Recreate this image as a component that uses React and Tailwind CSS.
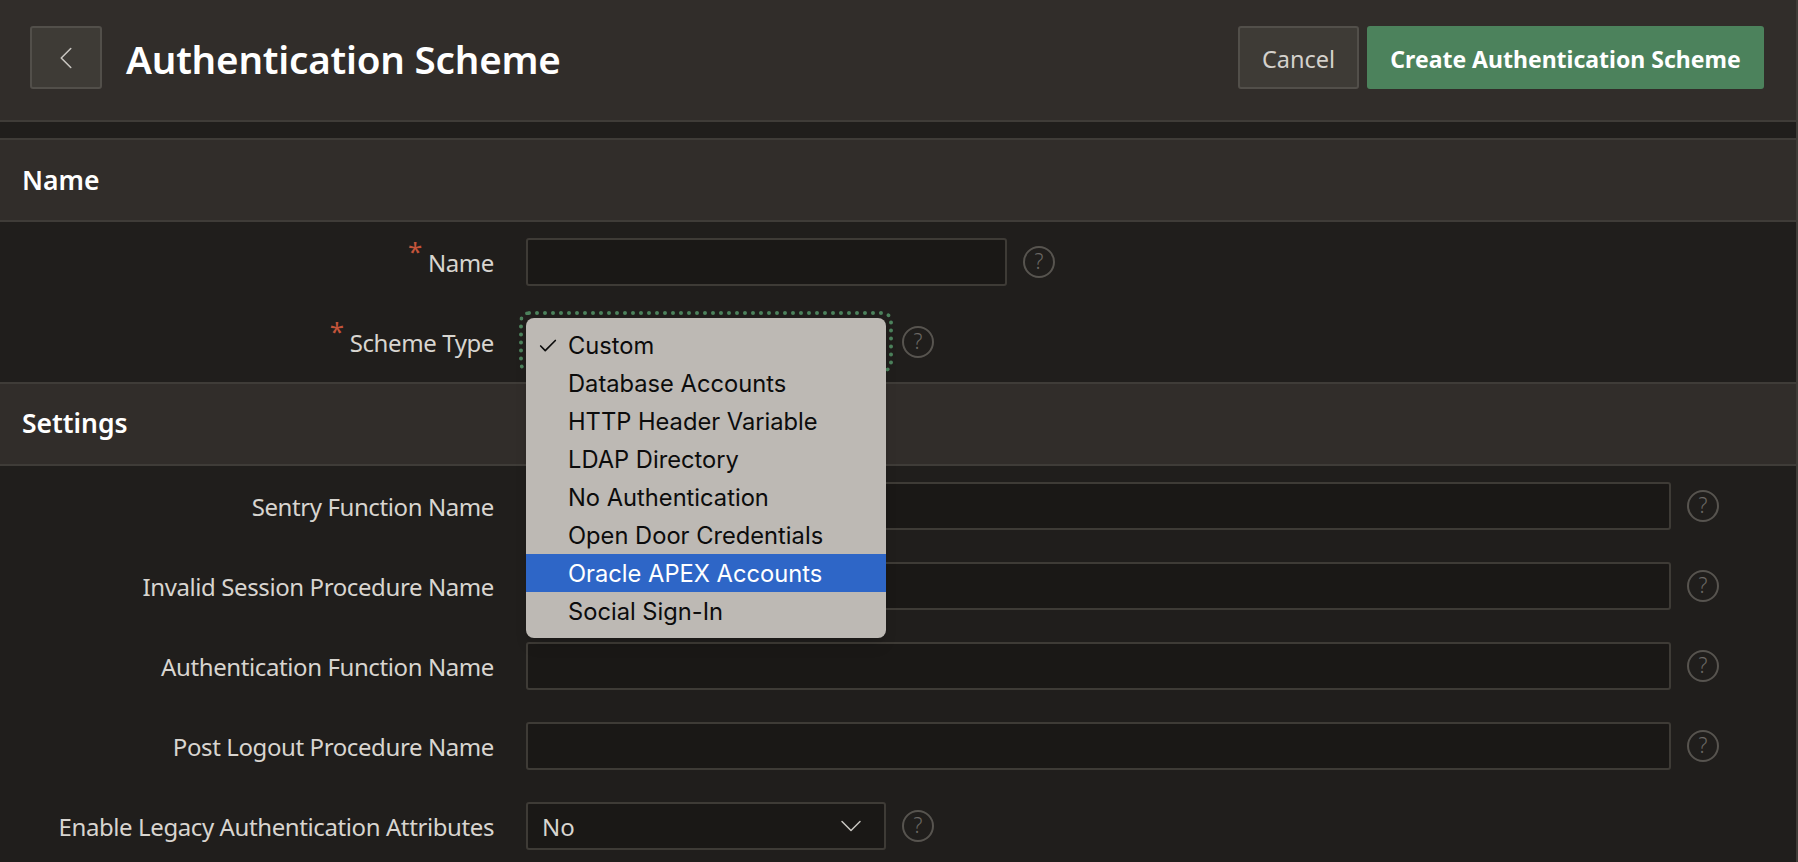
import { ChevronLeft, ChevronDown, Check } from 'lucide-react';

const MENU_ITEMS = [
  'Custom',
  'Database Accounts',
  'HTTP Header Variable',
  'LDAP Directory',
  'No Authentication',
  'Open Door Credentials',
  'Oracle APEX Accounts',
  'Social Sign-In',
];

const FONT = 'font-["Noto_Sans",sans-serif]';

function Help() {
  return (
    <div className="ml-4 flex h-8 w-8 shrink-0 items-center justify-center rounded-full border-2 border-[#57544f] text-[21px] font-light text-[#6b6864]">
      ?
    </div>
  );
}

function Label({ text, required }) {
  return (
    <div className="flex w-[494px] shrink-0 justify-end pt-[2px] text-[24px] tracking-[-0.4px] text-[#d8d5d0]">
      {required && <span className="relative -top-[6px] mr-[6px] text-[26px] leading-6 text-[#c4543a]">*</span>}
      <span>{text}</span>
    </div>
  );
}

function Row({ text, required, width = 'w-[1145px]' }) {
  return (
    <div className="flex h-20 items-center">
      <Label text={text} required={required} />
      <div className={`ml-8 h-[48px] rounded-[3px] border-2 border-[#3e3b36] bg-[#1a1816] ${width}`} />
      <Help />
    </div>
  );
}

function Menu() {
  return (
    <div className='absolute top-0 left-0 z-10 w-full rounded-lg bg-[#bdb9b4] py-2 font-["Inter",sans-serif] text-[23.7px] text-[#0c0c0c] shadow-lg'>
      {MENU_ITEMS.map((item, i) => (
        <div
          key={item}
          className={`relative flex h-[38px] items-center pt-[1px] pl-[42px] ${item === 'Oracle APEX Accounts' ? 'bg-[#2e66c7] text-white' : ''}`}
        >
          {i === 0 && <Check className="absolute left-[11px] h-[22px] w-[22px]" strokeWidth={1.8} />}
          {item}
        </div>
      ))}
    </div>
  );
}

export default function App() {
  return (
    <div className={`h-[862px] w-full overflow-hidden border-r-2 border-[#3f3c38] bg-[#201e1c] ${FONT}`}>
      <div className="flex h-[122px] items-start border-b-2 border-[#3f3c38] bg-[#312d2a] pt-[26px] pr-[32px] pl-[30px]">
        <button className="flex h-[63px] w-[72px] items-center justify-center rounded-[3px] border-2 border-[#524f4a] bg-[#3e3b36] text-[#c9c6c1]">
          <ChevronLeft className="h-[38px] w-[38px]" strokeWidth={1} />
        </button>
        <h1 className="ml-6 text-[38.6px] leading-[66px] font-semibold tracking-[-0.2px] text-white">Authentication Scheme</h1>
        <div className="ml-auto flex gap-2">
          <button className="h-[63px] w-[121px] rounded-[3px] border-2 border-[#524f4a] bg-[#3e3b36] pt-1 text-[23.5px] text-[#d4d1cc]">Cancel</button>
          <button className="h-[63px] w-[397px] rounded-[3px] bg-[#4c825c] pt-1 text-[23px] font-bold text-white">Create Authentication Scheme</button>
        </div>
      </div>

      <div className="h-4" />

      <div className="flex h-[84px] items-center border-y-2 border-[#3f3c38] bg-[#312d2a] pt-[2px] pl-[22px] text-[26.5px] font-semibold text-white">Name</div>

      <div>
        <Row text="Name" required width="w-[481px]" />
        <div className="flex h-20 items-center">
          <Label text="Scheme Type" required />
          <div className="relative ml-8 h-[48px] w-[360px] rounded-[3px] outline-4 outline-offset-3 outline-[#4c825c] outline-dotted">
            <Menu />
          </div>
          <Help />
        </div>
      </div>

      <div className="flex h-[84px] items-center border-y-2 border-[#3f3c38] bg-[#312d2a] pl-[22px] text-[26.5px] font-semibold text-white">Settings</div>

      <div>
        <Row text="Sentry Function Name" />
        <Row text="Invalid Session Procedure Name" />
        <Row text="Authentication Function Name" />
        <Row text="Post Logout Procedure Name" />
        <div className="flex h-20 items-center">
          <Label text="Enable Legacy Authentication Attributes" />
          <div className="ml-8 flex h-[48px] w-[360px] items-center justify-between rounded-[3px] border-2 border-[#3e3b36] bg-[#1a1816] pr-[15px] pl-[14px] text-[24px] text-[#d8d5d0]">
            <span className="pt-[2px]">No</span>
            <ChevronDown className="h-9 w-9 text-[#c9c6c1]" strokeWidth={1} />
          </div>
          <Help />
        </div>
      </div>
    </div>
  );
}
